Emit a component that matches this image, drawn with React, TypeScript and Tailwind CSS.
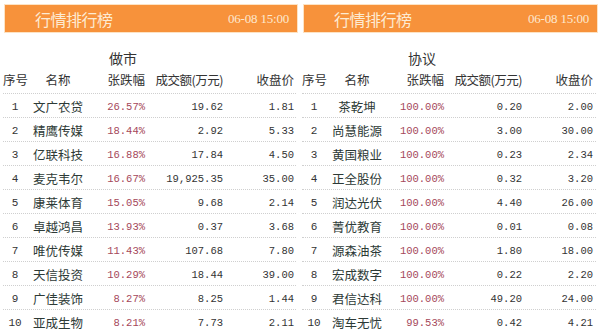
type Row = [string, string, string, string]

const zuoshi: Row[] = [
  ['文广农贷', '26.57%', '19.62', '1.81'],
  ['精鹰传媒', '18.44%', '2.92', '5.33'],
  ['亿联科技', '16.88%', '17.84', '4.50'],
  ['麦克韦尔', '16.67%', '19,925.35', '35.00'],
  ['康莱体育', '15.05%', '9.68', '2.14'],
  ['卓越鸿昌', '13.93%', '0.37', '3.68'],
  ['唯优传媒', '11.43%', '107.68', '7.80'],
  ['天信投资', '10.29%', '18.44', '39.00'],
  ['广佳装饰', '8.27%', '8.25', '1.44'],
  ['亚成生物', '8.21%', '7.73', '2.11'],
]

const xieyi: Row[] = [
  ['茶乾坤', '100.00%', '0.20', '2.00'],
  ['尚慧能源', '100.00%', '3.00', '30.00'],
  ['黄国粮业', '100.00%', '0.23', '2.34'],
  ['正全股份', '100.00%', '0.32', '3.20'],
  ['润达光伏', '100.00%', '4.40', '26.00'],
  ['菁优教育', '100.00%', '0.01', '0.08'],
  ['源森油茶', '100.00%', '1.80', '18.00'],
  ['宏成数字', '100.00%', '0.22', '2.20'],
  ['君信达科', '100.00%', '49.20', '24.00'],
  ['淘车无忧', '99.53%', '0.42', '4.21'],
]

const cjk = 'font-["Noto_Sans_CJK_SC",sans-serif]'
const cols = 'grid grid-cols-[30px_56px_59px_78px_73px]'

function Panel({ title, rows, first }: { title: string; rows: Row[]; first?: boolean }) {
  return (
    <div className={first ? 'w-[299px]' : 'w-[300px]'}>
      <div className="pt-[4px] pl-[4px] pr-[1px]">
        <div className="border border-[#fde3c4]">
          <div className="h-[27px] bg-[#f7923b] flex items-center justify-between pl-[30px] pr-[8px]">
            <span className={`${cjk} text-[16px] leading-none text-[#fdebd3] tracking-[-0.5px]`}>行情排行榜</span>
            <span className='font-["Liberation_Serif",serif] text-[13px] text-[#fde8cf] tracking-[-0.2px]'>06-08 15:00</span>
          </div>
        </div>
      </div>
      <div className={`${cjk} h-[20px] mt-[15px] pl-[109px] text-[14px] leading-[20px] text-[#333]`}>{title}</div>
      <div className={`${cols} ${cjk} h-[25px] items-center text-[12.5px] text-[#333] leading-none`}>
        <span className="pl-[3px]">序号</span>
        <span className="text-center">名称</span>
        <span className="text-right">张跌幅</span>
        <span className="text-right tracking-[-0.5px]">成交额(万元)</span>
        <span className="text-right pr-[2px]">收盘价</span>
      </div>
      <div className="mx-[3px] border-t border-dotted border-[#cfcfcf]" />
      {rows.map((r, i) => (
        <div key={i}>
          <div className={`${cols} h-[23px] pt-[4px] items-center leading-none`}>
            <span className='text-center font-["Liberation_Mono",monospace] text-[11px] text-[#333]'>{i + 1}</span>
            <span className={`${cjk} text-center text-[12.5px] text-[#2d3a36]`}>{r[0]}</span>
            <span className='text-right font-["Liberation_Mono",monospace] text-[10.5px] text-[#a5475a]'>{r[1]}</span>
            <span className='text-right font-["Liberation_Mono",monospace] text-[10.5px] text-[#333]'>{r[2]}</span>
            <span className='text-right pr-[2px] font-["Liberation_Mono",monospace] text-[10.5px] text-[#333]'>{r[3]}</span>
          </div>
          {i < rows.length - 1 && <div className="mx-[3px] border-t border-dotted border-[#cfcfcf]" />}
        </div>
      ))}
    </div>
  )
}

export default function App() {
  return (
    <div className="w-[599px] h-[336px] overflow-hidden bg-white flex">
      <Panel title="做市" rows={zuoshi} first />
      <Panel title="协议" rows={xieyi} />
    </div>
  )
}
